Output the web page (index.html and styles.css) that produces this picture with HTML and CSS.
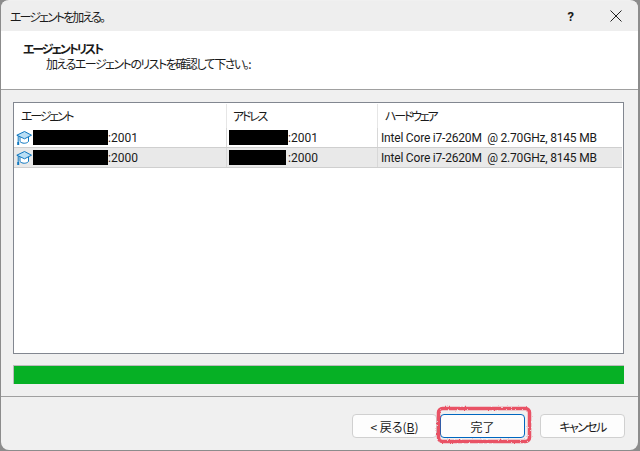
FILE: index.html
```html
<!DOCTYPE html>
<html lang="ja">
<head>
	<meta charset="utf-8">
	<title>エージェントを加える。</title>
	<link rel="stylesheet" href="styles.css">
</head>
<body>
	<div class="window">
		<div class="titlebar">
			<span class="title">エージェントを加える。</span>
			<span class="help">?</span>
			<svg class="close" width="14" height="14" viewBox="0 0 14 14"><path d="M1.5 1.5 12.5 12.5M12.5 1.5 1.5 12.5" stroke="#222" stroke-width="1" fill="none"/></svg>
		</div>
		<div class="header">
			<div class="header_title">エージェントリスト</div>
			<div class="header_sub">加えるエージェントのリストを確認して下さい。:</div>
		</div>
		<div class="content">
			<div class="list">
				<div class="row head">
					<div class="col c1">エージェント</div>
					<div class="col c2">アドレス</div>
					<div class="col c3">ハードウェア</div>
				</div>
				<div class="row item">
					<div class="col c1">
						<svg class="cap" width="16" height="16" viewBox="0 0 16 16"><path d="M4 7v4.500c2 2.300 6.500 2.300 8.500 0V7" fill="#fff" stroke="#0f78c0"/><path d="M.8 5.200 8.500 1.500 15.500 5.200 8.500 8.800Z" fill="#b9def5" stroke="#0f78c0" stroke-linejoin="round"/><path d="M2.200 6v6" stroke="#0f78c0" fill="none"/><path d="M1.200 12h2v3h-2z" fill="#0f78c0"/></svg>
						<span class="mask m1"></span><span>:2001</span>
					</div>
					<div class="col c2"><span class="mask m2"></span><span>:2001</span></div>
					<div class="col c3">Intel Core i7-2620M&nbsp; @ 2.70GHz, 8145 MB</div>
				</div>
				<div class="row item selected">
					<div class="col c1">
						<svg class="cap" width="16" height="16" viewBox="0 0 16 16"><path d="M4 7v4.500c2 2.300 6.500 2.300 8.500 0V7" fill="#fff" stroke="#0f78c0"/><path d="M.8 5.200 8.500 1.500 15.500 5.200 8.500 8.800Z" fill="#b9def5" stroke="#0f78c0" stroke-linejoin="round"/><path d="M2.200 6v6" stroke="#0f78c0" fill="none"/><path d="M1.200 12h2v3h-2z" fill="#0f78c0"/></svg>
						<span class="mask m1"></span><span>:2000</span>
					</div>
					<div class="col c2"><span class="mask m3"></span><span>:2000</span></div>
					<div class="col c3">Intel Core i7-2620M&nbsp; @ 2.70GHz, 8145 MB</div>
				</div>
			</div>
			<div class="progress"></div>
		</div>
		<div class="footer">
			<button class="btn back">&lt; 戻る(<u>B</u>)</button>
			<div class="finish_wrap">
				<button class="btn finish">完了</button>
				<svg class="scribble" width="101" height="44" viewBox="0 0 101 44">
					<filter id="rough" x="-5%" y="-10%" width="110%" height="120%">
						<feTurbulence type="fractalNoise" baseFrequency="0.45" numOctaves="2" seed="4"/>
						<feDisplacementMap in="SourceGraphic" scale="2.500"/>
					</filter>
					<rect x="5.500" y="5.500" width="91" height="33" rx="4" fill="none" stroke="#e8354c" stroke-opacity=".85" stroke-width="3.500" filter="url(#rough)"/>
				</svg>
			</div>
			<button class="btn cancel">キャンセル</button>
		</div>
	</div>
</body>
</html>
```

FILE: styles.css
```css
html, body {
	margin: 0;
	height: 100%;
}

body {
	background-color: #8c8c8c;
	font-family: Roboto, "Noto Sans CJK JP", sans-serif;
	font-size: 12px;
	color: #1a1a1a;
	overflow: hidden;
}

.window {
	box-sizing: border-box;
	width: 637px;
	height: 450px;
	margin-left: 1px;
	padding-top: 1px;
	background-color: #f0f0f0;
	border-radius: 8px;
	overflow: hidden;
	display: flex;
	flex-direction: column;
}

.title, .header, .head, .btn {
	font-family: "Noto Sans CJK JP", sans-serif;
	font-feature-settings: "palt";
}

.titlebar {
	height: 30px;
	flex: none;
	background-color: #eeeeee;
	display: flex;
	align-items: center;
	padding-left: 9px;
}

.title {
	flex: 1;
	letter-spacing: -1.9px;
}

.help {
	font-weight: 700;
	font-size: 13px;
	margin-right: 35px;
}

.close {
	margin-right: 15px;
}

.header {
	box-sizing: border-box;
	height: 59px;
	flex: none;
	background-color: #fff;
	border-bottom: 1px solid #a0a0a0;
	padding: 9px 0 0 22px;
	line-height: 18px;
}

.header_title {
	font-weight: 700;
	letter-spacing: -2.1px;
}

.header_sub {
	padding-left: 23px;
	margin-top: -3px;
	letter-spacing: -1.5px;
}

.content {
	flex: 1;
	padding: 12px 14px 0 12px;
}

.list {
	box-sizing: border-box;
	height: 252px;
	background-color: #fff;
	border: 1px solid #828790;
	padding: 1px 1px 0 0;
}

.row {
	display: flex;
}

.col {
	box-sizing: border-box;
	display: flex;
	align-items: center;
	white-space: nowrap;
}

.item .c3 {
	letter-spacing: -.2px;
}

.c1 {
	width: 212px;
	padding-left: 2px;
}

.c2 {
	width: 151px;
	padding-left: 2px;
	border-left: 1px solid #d8d8d8;
}

.c3 {
	flex: 1;
	padding-left: 3px;
	border-left: 1px solid #d8d8d8;
}

.head {
	height: 24px;
	letter-spacing: -2.2px;
}

.head .col {
	padding: 0 0 2px 7px;
	border-color: #e6e6e6;
}

.head .c2 {
	padding-left: 6px;
}

.item {
	height: 20px;
	border-bottom: 1px solid #cfcfcf;
	box-sizing: border-box;
}

.selected {
	background-color: #e9e9e9;
}

.cap {
	flex: none;
}

.mask {
	display: block;
	height: 15px;
	background-color: #000;
}

.m1 {
	width: 75px;
	margin-left: 1px;
}

.m2 {
	width: 59px;
}

.m3 {
	width: 57px;
	margin-right: 2px;
}

.progress {
	box-sizing: border-box;
	height: 19px;
	margin-top: 11px;
	background-color: #06b025;
	border: 1px solid #bcbcbc;
	border-width: 1px 0 0 1px;
}

.footer {
	box-sizing: border-box;
	height: 54px;
	flex: none;
	border-top: 1px solid #a0a0a0;
	display: flex;
	justify-content: flex-end;
	align-items: flex-start;
	padding: 17px 13px 0 0;
}

.btn {
	box-sizing: border-box;
	width: 85px;
	height: 24px;
	padding: 0;
	background-color: #fdfdfd;
	border: 1px solid #d0d0d0;
	border-radius: 4px;
	font-size: 12px;
	color: #1a1a1a;
}

.finish_wrap {
	position: relative;
	margin-left: 3px;
	height: 24px;
}

.finish {
	display: block;
	border: 1px solid #0067c0;
}

.scribble {
	position: absolute;
	left: -7px;
	top: -11px;
	pointer-events: none;
}

.cancel {
	margin-left: 15px;
	letter-spacing: -1.6px;
}
```
